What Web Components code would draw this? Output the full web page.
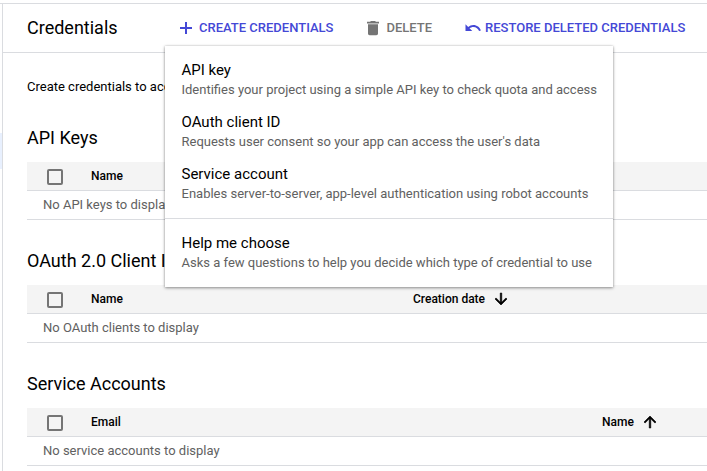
<!DOCTYPE html>
<html lang="en">
<head>
<meta charset="utf-8">
<title>Credentials</title>
<style>
html,body{margin:0;height:100%;overflow:hidden;background:#fff}
body{font-family:Roboto,"Liberation Sans",sans-serif;color:#000}
</style>
</head>
<body>
<credentials-page></credentials-page>
<script>
class BaseElement extends HTMLElement {
  connectedCallback() {
    if (this.shadowRoot) return;
    this.attachShadow({ mode: "open" }).innerHTML = this.render();
  }
}

const ICONS = {
  add: '<path d="M19.200 13.200h-6v6h-2.400v-6h-6v-2.400h6v-6h2.400v6h6z"/>',
  trash: '<path d="M6 18.600c0 1.100.9 2 2 2h8c1.100 0 2-.9 2-2V7.500H6zM19.200 4.500h-3.700l-1-1h-5l-1 1H4.800v2h14.400z"/>',
  undo: '<path d="M12.500 8c-2.650 0-5.050.99-6.900 2.600L2 7v9h9l-3.620-3.620c1.390-1.160 3.160-1.880 5.120-1.880 3.540 0 6.550 2.310 7.600 5.500l2.370-.78C21.080 11.030 17.150 8 12.500 8z"/>',
  down: '<path d="M20 12l-1.410-1.410L13 16.170V4h-2v12.170l-5.580-5.590L4 12l8 8z"/>',
  up: '<path d="M4 12l1.410 1.410L11 7.830V20h2V7.830l5.580 5.590L20 12l-8-8z"/>'
};

customElements.define("ui-icon", class extends BaseElement {
  render() {
    const size = this.getAttribute("size") || 20;
    const bold = this.hasAttribute("bold") ? "stroke:currentColor;stroke-width:.8" : "";
    return `<style>:host{display:block;flex:none;width:${size}px;height:${size}px}
      svg{display:block;width:100%;height:100%;fill:currentColor;${bold}}</style>
      <svg viewBox="0 0 24 24">${ICONS[this.getAttribute("name")]}</svg>`;
  }
});

customElements.define("action-button", class extends BaseElement {
  render() {
    return `<style>:host{display:flex;align-items:center;height:20px;color:#4448d6;
      font-weight:500;font-size:13px;line-height:20px;white-space:nowrap}
      :host([disabled]){color:#757575}
      ui-icon{margin-right:3px}</style>
      <ui-icon name="${this.getAttribute("icon")}" size="${this.getAttribute("size") || 20}"></ui-icon><span><slot></slot></span>`;
  }
});

customElements.define("page-toolbar", class extends BaseElement {
  render() {
    return `<style>:host{display:flex;align-items:center;height:48px;padding-left:24px;border-bottom:1px solid #dadce0}
      h1{margin:0;font-size:18px;font-weight:400;line-height:24px;width:149px}
      .a{margin-right:30px}.b{margin-right:32px}</style>
      <h1>Credentials</h1>
      <action-button class="a" icon="add">CREATE CREDENTIALS</action-button>
      <action-button class="b" icon="trash" disabled>DELETE</action-button>
      <action-button icon="undo" size="18">RESTORE DELETED CREDENTIALS</action-button>`;
  }
});

customElements.define("check-box", class extends BaseElement {
  render() {
    return `<style>:host{display:block;box-sizing:border-box;width:16px;height:16px;border:2px solid #757575;border-radius:2px}</style>`;
  }
});

customElements.define("credential-table", class extends BaseElement {
  render() {
    const a = n => this.getAttribute(n);
    const extra = a("sort-label")
      ? `<span class="sort">${a("sort-label")}<ui-icon bold size="18" name="${a("sort-icon")}"></ui-icon></span>` : "";
    return `<style>:host{display:block;height:123px;margin-left:24px}
      h2{margin:0;font-size:18px;font-weight:400;line-height:24px;height:36px;white-space:nowrap}
      .head{display:grid;grid-template-columns:44px ${a("split") || "322px"} 1fr;align-items:center;height:28px;padding-left:20px;
        background:#f4f4f4;border-bottom:1px solid #dadce0;font-size:12px;font-weight:500}
      check-box{margin-top:2px}
      .sort{display:flex;align-items:center;gap:7px;white-space:nowrap}
      .row{height:28px;border-bottom:1px solid #dadce0;padding-left:16px;font-size:13px;line-height:28px;color:#616161;white-space:nowrap}</style>
      <h2>${a("heading")}</h2>
      <div class="head"><check-box></check-box><span>${a("column")}</span>${extra}</div>
      <div class="row"><slot></slot></div>`;
  }
});

customElements.define("menu-item", class extends BaseElement {
  render() {
    return `<style>:host{display:block;height:52px;padding-left:16.500px;white-space:nowrap}
      .t{font-size:15px;line-height:20px;color:#000}
      .d{font-size:13px;line-height:20px;color:#616161}</style>
      <div class="t">${this.getAttribute("label")}</div><div class="d"><slot></slot></div>`;
  }
});

customElements.define("create-menu", class extends BaseElement {
  render() {
    return `<style>:host{display:block;position:absolute;left:165px;top:46px;width:448px;height:241px;background:#fff;
      box-sizing:border-box;padding-top:14px;
      box-shadow:0 1px 3px rgba(0,0,0,.4),0 0 2px rgba(0,0,0,.16)}
      hr{border:0;height:1px;background:#dadce0;margin:2px 0 14px}</style>
      <menu-item label="API key">Identifies your project using a simple API key to check quota and access</menu-item>
      <menu-item label="OAuth client ID">Requests user consent so your app can access the user's data</menu-item>
      <menu-item label="Service account">Enables server-to-server, app-level authentication using robot accounts</menu-item>
      <hr>
      <menu-item label="Help me choose">Asks a few questions to help you decide which type of credential to use</menu-item>`;
  }
});

customElements.define("credentials-page", class extends BaseElement {
  render() {
    return `<style>:host{display:grid;grid-template-columns:2px 1fr;margin-top:3px;height:468px;overflow:hidden;border-top:1px solid #dadce0;box-sizing:border-box}
      nav{padding-top:129px}
      nav div{height:36px;background:#e8f0fe}
      main{border-left:1px solid #dadce0;min-width:0}
      p{margin:0;padding:24px 0 0 24px;font-size:13px;line-height:20px;height:49px;width:140px;overflow:hidden;white-space:nowrap}</style>
      <nav><div></div></nav>
      <main>
        <page-toolbar></page-toolbar>
        <p>Create credentials to access</p>
        <credential-table heading="API Keys" column="Name">No API keys to display</credential-table>
        <credential-table heading="OAuth 2.0 Client IDs" column="Name" sort-label="Creation date" sort-icon="down">No OAuth clients to display</credential-table>
        <credential-table heading="Service Accounts" column="Email" split="511px" sort-label="Name" sort-icon="up">No service accounts to display</credential-table>
      </main>
      <create-menu></create-menu>`;
  }
});
</script>
</body>
</html>
